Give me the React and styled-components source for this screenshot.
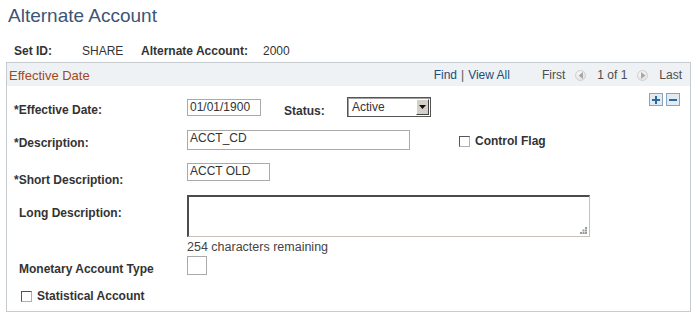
import styled, { createGlobalStyle } from "styled-components";

const GlobalStyle = createGlobalStyle`
  body {
    margin: 0;
    background: #fff;
    font-family: "Liberation Sans", Arial, sans-serif;
    color: #333;
  }
`;

export default function App() {
  return (
    <>
      <GlobalStyle />
      <Page>
        <Title>Alternate Account</Title>
        <KeyBar>
          <KeyLabel $w={68}>Set ID:</KeyLabel>
          <KeyValue $w={59}>SHARE</KeyValue>
          <KeyLabel $w={122}>Alternate Account:</KeyLabel>
          <KeyValue>2000</KeyValue>
        </KeyBar>

        <Box>
          <BoxHeader>
            <HeaderTitle>Effective Date</HeaderTitle>
            <Nav>
              <NavLink>Find</NavLink>
              <Pipe>|</Pipe>
              <NavLink>View All</NavLink>
              <NavText $ml={32}>First</NavText>
              <ArrowButton dir="left" />
              <NavText>1 of 1</NavText>
              <ArrowButton dir="right" />
              <NavText>Last</NavText>
            </Nav>
          </BoxHeader>

          <BoxBody>
            <Row>
              <Label $pt={10}>*Effective Date:</Label>
              <TextBox $w={74} $h={17} $mt={6}>01/01/1900</TextBox>
              <InlineLabel $pt={11} $ml={23}>Status:</InlineLabel>
              <Select $mt={4}>
                <span>Active</span>
                <DropButton>
                  <svg width="7" height="4" viewBox="0 0 7 4">
                    <path d="M0 0h7L3.5 4z" fill="#111" />
                  </svg>
                </DropButton>
              </Select>
              <RowButtons>
                <SquareButton>
                  <svg width="10" height="10" viewBox="0 0 10 10">
                    <path d="M4 1h2v3h3v2H6v3H4V6H1V4h3z" fill="#2a6aa3" />
                  </svg>
                </SquareButton>
                <SquareButton>
                  <svg width="10" height="10" viewBox="0 0 10 10">
                    <path d="M1 4h8v2H1z" fill="#2a6aa3" />
                  </svg>
                </SquareButton>
              </RowButtons>
            </Row>

            <Row $mt={12}>
              <Label $pt={6}>*Description:</Label>
              <TextBox $w={223} $h={20}>ACCT_CD</TextBox>
              <CheckField $ml={49} $mt={4}>
                <Check />
                Control Flag
              </CheckField>
            </Row>

            <Row $mt={13}>
              <Label $pt={10}>*Short Description:</Label>
              <TextBox $w={83} $h={18}>ACCT OLD</TextBox>
            </Row>

            <Row $mt={8}>
              <Label $pt={11} $indent={5}>
                Long Description:
              </Label>
              <FieldStack>
                <TextArea>
                  <Grip width="7" height="7" viewBox="0 0 7 7">
                    <g fill="#9a9a9a">
                      <rect x="5" y="0" width="2" height="2" />
                      <rect x="2.5" y="2.5" width="2" height="2" />
                      <rect x="5" y="2.5" width="2" height="2" />
                      <rect x="0" y="5" width="2" height="2" />
                      <rect x="2.5" y="5" width="2" height="2" />
                      <rect x="5" y="5" width="2" height="2" />
                    </g>
                  </Grip>
                </TextArea>
                <Counter>254 characters remaining</Counter>
              </FieldStack>
            </Row>

            <Row $mt={2}>
              <Label $pt={6} $indent={5}>
                Monetary Account Type
              </Label>
              <TextBox $w={20} $h={19} />
            </Row>

            <Row $mt={13}>
              <CheckField $ml={7}>
                <Check />
                Statistical Account
              </CheckField>
            </Row>
          </BoxBody>
        </Box>
      </Page>
    </>
  );
}

function ArrowButton({ dir }) {
  return (
    <Arrow>
      <svg width="6" height="7" viewBox="0 0 6 7">
        {dir === "left" ? (
          <path d="M5 0v7L0.5 3.5z" fill="#a8a8a8" />
        ) : (
          <path d="M1 0v7l4.5-3.5z" fill="#a8a8a8" />
        )}
      </svg>
    </Arrow>
  );
}

const Page = styled.div`
  width: 697px;
  height: 318px;
  padding: 5px 6px 0 6px;
  box-sizing: border-box;
`;

const Title = styled.h1`
  margin: 0 0 0 2px;
  font-size: 19px;
  line-height: 22px;
  font-weight: normal;
  color: #3c5577;
`;

const KeyBar = styled.div`
  display: flex;
  margin: 17px 0 4px 8px;
  font-size: 12px;
  line-height: 14px;
`;

const KeyLabel = styled.span`
  width: ${(p) => p.$w}px;
  font-weight: bold;
  color: #333;
`;

const KeyValue = styled.span`
  width: ${(p) => (p.$w ? `${p.$w}px` : "auto")};
  color: #333;
`;

const Box = styled.div`
  width: 685px;
  height: 250px;
  border: 1px solid #c6cbd0;
  box-sizing: border-box;
`;

const BoxHeader = styled.div`
  display: flex;
  align-items: center;
  height: 23px;
  padding: 1px 8px 0 2px;
  background: #eef2f4;
  box-sizing: border-box;
`;

const HeaderTitle = styled.span`
  font-size: 13px;
  color: #a2481b;
`;

const Nav = styled.div`
  display: flex;
  align-items: center;
  margin-left: auto;
  font-size: 12px;
  color: #4a4a4a;
`;

const NavLink = styled.span`
  color: #1f4c80;
`;

const Pipe = styled.span`
  margin: 0 4px;
  color: #555;
`;

const NavText = styled.span`
  margin-left: ${(p) => p.$ml || 0}px;
  color: #4d4d4d;
`;

const Arrow = styled.span`
  display: inline-flex;
  align-items: center;
  justify-content: center;
  width: 11px;
  height: 11px;
  margin: 0 11px 0 10px;
  border-radius: 50%;
  background: radial-gradient(circle at 40% 35%, #fbfbfb, #dcdcdc);
  border: 1px solid #d0d0d0;
  box-sizing: border-box;
`;

const BoxBody = styled.div`
  padding: 7px 10px 0 7px;
`;

const Row = styled.div`
  display: flex;
  align-items: flex-start;
  margin-top: ${(p) => p.$mt || 0}px;
  font-size: 12px;
  line-height: 14px;
`;

const Label = styled.div`
  width: ${(p) => 173 - (p.$indent || 0)}px;
  padding-top: ${(p) => p.$pt || 0}px;
  padding-left: ${(p) => p.$indent || 0}px;
  font-weight: bold;
  color: #333;
`;

const InlineLabel = styled.div`
  width: 63px;
  margin-left: ${(p) => p.$ml || 0}px;
  padding-top: ${(p) => p.$pt || 0}px;
  font-weight: bold;
  color: #333;
`;

const TextBox = styled.div`
  width: ${(p) => p.$w}px;
  height: ${(p) => p.$h}px;
  margin-top: ${(p) => p.$mt || 0}px;
  padding: 1px 2px 0;
  border: 1px solid #aaa;
  box-sizing: border-box;
  font-size: 12px;
  line-height: 13px;
  color: #333;
`;

const Select = styled.div`
  display: flex;
  align-items: stretch;
  width: 84px;
  height: 20px;
  margin-top: ${(p) => p.$mt || 0}px;
  border: 1px solid #555;
  box-shadow: inset 1px 1px 0 #a0a0a0;
  box-sizing: border-box;

  span {
    flex: 1;
    padding: 2px 0 0 4px;
    color: #333;
  }
`;

const DropButton = styled.div`
  display: flex;
  align-items: center;
  justify-content: center;
  width: 13px;
  margin: 1px;
  background: #d4d0c8;
  border: 1px solid;
  border-color: #fff #404040 #404040 #fff;
  box-sizing: border-box;
`;

const RowButtons = styled.div`
  display: flex;
  gap: 3px;
  margin-left: auto;
`;

const SquareButton = styled.div`
  display: flex;
  align-items: center;
  justify-content: center;
  width: 14px;
  height: 13px;
  background: #e3ebf2;
  border: 1px solid #8aa3bb;
  box-sizing: border-box;
`;

const CheckField = styled.label`
  display: flex;
  align-items: center;
  gap: 5px;
  margin-left: ${(p) => p.$ml || 0}px;
  margin-top: ${(p) => p.$mt || 0}px;
  font-weight: bold;
  color: #333;
`;

const Check = styled.span`
  display: inline-block;
  width: 11px;
  height: 11px;
  background: #fff;
  border: 1px solid;
  border-color: #555 #b0b0b0 #b0b0b0 #555;
  box-sizing: border-box;
`;

const FieldStack = styled.div`
  display: flex;
  flex-direction: column;
`;

const TextArea = styled.div`
  position: relative;
  width: 403px;
  height: 42px;
  border: 1px solid #c8c2bc;
  border-top: 2px solid #4c4c4c;
  border-left: 2px solid #4c4c4c;
  box-sizing: border-box;
`;

const Grip = styled.svg`
  position: absolute;
  right: 2px;
  bottom: 2px;
`;

const Counter = styled.div`
  margin-top: 3px;
  font-size: 12.5px;
  line-height: 14px;
  color: #444;
`;
